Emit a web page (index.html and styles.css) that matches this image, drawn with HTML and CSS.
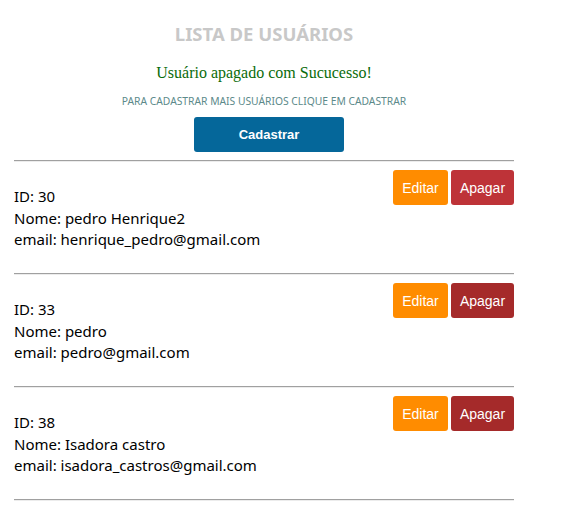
FILE: index.html
```html
<!DOCTYPE html>
<html lang="pt-BR">
<head>
<meta charset="utf-8">
<title>Lista de Usuários</title>
<link rel="stylesheet" href="styles.css">
</head>
<body>
<main class="page">
  <h1 class="title">LISTA DE USUÁRIOS</h1>
  <p class="msg">Usuário apagado com Sucucesso!</p>
  <p class="hint">PARA CADASTRAR MAIS USUÁRIOS CLIQUE EM CADASTRAR</p>
  <div class="cta-row"><a class="btn btn-primary" href="#">Cadastrar</a></div>
  <hr class="sep sep-first">
  <section class="item">
    <div class="info">
      <div>ID: 30</div>
      <div>Nome: pedro Henrique2</div>
      <div>email: henrique_pedro@gmail.com</div>
    </div>
    <div class="actions">
      <a class="btn btn-edit" href="#">Editar</a>
      <a class="btn btn-del btn-del-hover" href="#">Apagar</a>
    </div>
  </section>
  <hr class="sep">
  <section class="item">
    <div class="info">
      <div>ID: 33</div>
      <div>Nome: pedro</div>
      <div>email: pedro@gmail.com</div>
    </div>
    <div class="actions">
      <a class="btn btn-edit" href="#">Editar</a>
      <a class="btn btn-del" href="#">Apagar</a>
    </div>
  </section>
  <hr class="sep">
  <section class="item">
    <div class="info">
      <div>ID: 38</div>
      <div>Nome: Isadora castro</div>
      <div>email: isadora_castros@gmail.com</div>
    </div>
    <div class="actions">
      <a class="btn btn-edit" href="#">Editar</a>
      <a class="btn btn-del" href="#">Apagar</a>
    </div>
  </section>
  <hr class="sep">
</main>
</body>
</html>
```
FILE: styles.css
```css
html, body {
  margin: 0;
  padding: 0;
  background: #ffffff;
}
body {
  padding: 0 14px;
  font-family: "Noto Sans", "Open Sans", sans-serif;
  color: #000;
}
.page {
  width: 500px;
}
.title {
  margin: 0;
  padding-top: 22px;
  font-size: 18.5px;
  line-height: 24px;
  font-weight: 700;
  color: #c8c8c8;
  text-align: center;
}
.msg {
  margin: 17px 0 0;
  font-family: "Liberation Serif", serif;
  font-size: 16px;
  line-height: 20px;
  color: #0a6b0a;
  text-align: center;
}
.hint {
  margin: 11px 0 0;
  font-size: 10.3px;
  line-height: 14px;
  color: #5c8a8a;
  text-align: center;
}
.cta-row {
  display: flex;
  justify-content: center;
  margin-top: 9px;
  padding-left: 10px;
}
.btn {
  display: inline-flex;
  align-items: center;
  justify-content: center;
  height: 35px;
  border-radius: 3px;
  color: #fff;
  text-decoration: none;
  font-family: "Liberation Sans", Arial, sans-serif;
  font-size: 14px;
}
.btn-primary {
  width: 150px;
  background: #05679a;
  font-size: 13px;
  font-weight: 700;
}
.sep {
  margin: 0;
  height: 0;
  border: 0;
  border-top: 1px solid #a0a0a0;
  border-bottom: 1px solid #ececec;
}
.sep-first {
  margin-top: 8px;
}
.item {
  display: flex;
  justify-content: space-between;
  align-items: flex-start;
  height: 111px;
}
.info {
  margin-top: 24px;
  font-size: 15px;
  line-height: 21.5px;
}
.actions {
  display: flex;
  gap: 3px;
  margin-top: 8px;
}
.btn-edit {
  width: 55px;
  background: #ff8c00;
}
.btn-del {
  width: 63px;
  background: #a52a2a;
}
.btn-del-hover {
  background: #be3338;
}
```
